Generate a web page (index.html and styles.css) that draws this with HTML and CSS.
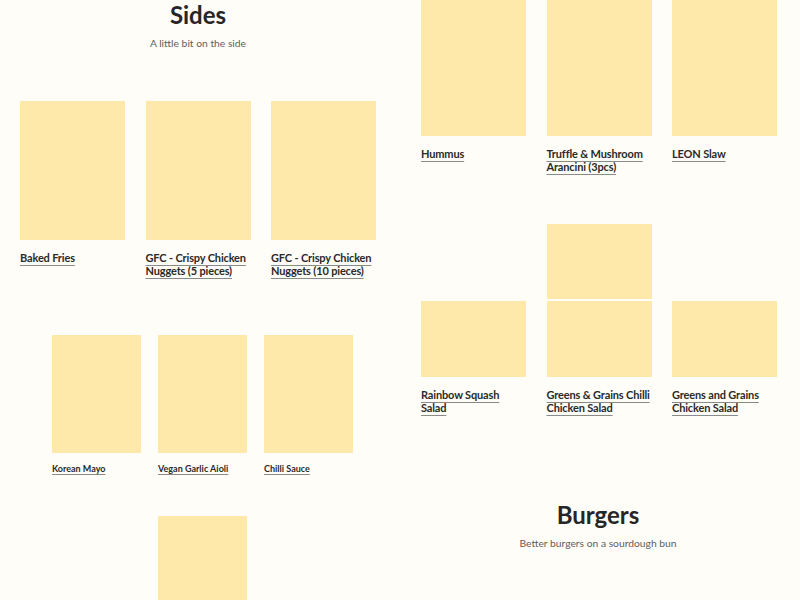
FILE: index.html
```html
<!DOCTYPE html>
<html lang="en">
<head>
<meta charset="utf-8">
<title>Menu</title>
<link rel="stylesheet" href="styles.css">
</head>
<body>
<main class="collage">
  <section class="tile tile-tl">
    <header class="section-head">
      <h2 class="section-title">Sides</h2>
      <p class="section-sub">A little bit on the side</p>
    </header>
    <div class="cards cards-lg">
      <a class="card" href="#"><div class="thumb"></div><span class="label">Baked Fries</span></a>
      <a class="card" href="#"><div class="thumb"></div><span class="label">GFC - Crispy Chicken Nuggets (5 pieces)</span></a>
      <a class="card" href="#"><div class="thumb"></div><span class="label">GFC - Crispy Chicken Nuggets (10 pieces)</span></a>
    </div>
  </section>

  <section class="tile tile-tr">
    <div class="cards cards-lg cards-tall">
      <a class="card" href="#"><div class="thumb"></div><span class="label">Hummus</span></a>
      <a class="card" href="#"><div class="thumb"></div><span class="label">Truffle &amp; Mushroom Arancini (3pcs)</span></a>
      <a class="card" href="#"><div class="thumb"></div><span class="label">LEON Slaw</span></a>
      <a class="card card-mid" href="#"><div class="thumb"></div></a>
    </div>
  </section>

  <section class="tile tile-bl">
    <div class="cards cards-sm">
      <a class="card" href="#"><div class="thumb"></div><span class="label">Korean Mayo</span></a>
      <a class="card" href="#"><div class="thumb"></div><span class="label">Vegan Garlic Aioli</span></a>
      <a class="card" href="#"><div class="thumb"></div><span class="label">Chilli Sauce</span></a>
      <a class="card card-mid" href="#"><div class="thumb"></div></a>
    </div>
  </section>

  <section class="tile tile-br">
    <div class="cards cards-lg cards-short">
      <a class="card" href="#"><div class="thumb"></div><span class="label">Rainbow Squash Salad</span></a>
      <a class="card" href="#"><div class="thumb"></div><span class="label">Greens &amp; Grains Chilli Chicken Salad</span></a>
      <a class="card" href="#"><div class="thumb"></div><span class="label">Greens and Grains Chicken Salad</span></a>
    </div>
    <header class="section-head section-head-burgers">
      <h2 class="section-title">Burgers</h2>
      <p class="section-sub">Better burgers on a sourdough bun</p>
    </header>
  </section>
</main>
</body>
</html>
```
FILE: styles.css
```css
* { box-sizing: border-box; }
html, body {
  margin: 0;
  padding: 0;
  background: #fefdf8;
}
body {
  font-family: "Lato", "Liberation Sans", sans-serif;
  color: #2a2a2a;
}
.collage {
  display: grid;
  grid-template-columns: 400px 400px;
  grid-template-rows: 300px 300px;
  width: 800px;
  height: 600px;
  overflow: hidden;
}
.tile {
  overflow: hidden;
  width: 400px;
  height: 300px;
  padding-right: 4px;
}

/* section headers */
.section-head {
  text-align: center;
}
.section-title {
  margin: 0;
  font-size: 24px;
  line-height: 30px;
  font-weight: 700;
  color: #262626;
}
.section-sub {
  margin: 6px 0 0;
  font-size: 10.3px;
  line-height: 14px;
  font-weight: 400;
  color: #5e5e5e;
}

/* cards */
.cards {
  display: grid;
}
.card {
  display: block;
  text-decoration: none;
  color: inherit;
}
.thumb {
  background: #fee9aa;
}
.label {
  display: block;
  font-weight: 700;
  text-decoration: underline;
  text-decoration-color: #8a8a8a;
  text-decoration-thickness: 1px;
  text-underline-offset: 3px;
}

.cards-lg {
  grid-template-columns: repeat(3, 105px);
  column-gap: 20.5px;
}
.cards-lg .thumb { height: 139px; }
.cards-lg .label {
  margin-top: 11px;
  font-size: 11px;
  line-height: 13px;
  letter-spacing: -0.15px;
}

/* top-left */
.tile-tl .cards {
  margin-top: 51px;
  padding-left: 20px;
}

/* top-right */
.tile-tr .cards {
  padding-left: 21px;
  row-gap: 51px;
}
.tile-tr .thumb { height: 136px; }
.card-mid { grid-column: 2; }
.tile-tr .card-mid .thumb { height: 75px; }

/* bottom-left */
.cards-sm {
  grid-template-columns: repeat(3, 89px);
  column-gap: 17px;
  row-gap: 42px;
  padding-left: 52px;
  margin-top: 35px;
}
.cards-sm .thumb { height: 118px; }
.cards-sm .card-mid .thumb { height: 90px; }
.cards-sm .label {
  margin-top: 10px;
  font-size: 9px;
  line-height: 11px;
  text-underline-offset: 2px;
}

/* bottom-right */
.tile-br .cards {
  padding-left: 21px;
  margin-top: 1px;
}
.tile-br .thumb { height: 76px; }
.section-head-burgers {
  margin-top: 86px;
}
```
